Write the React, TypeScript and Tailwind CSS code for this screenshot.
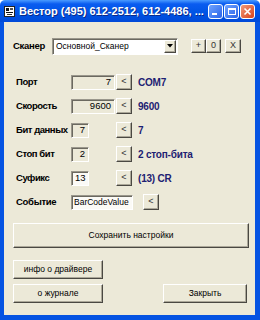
const btn =
  "flex items-center justify-center bg-[#ece9d8] border border-t-white border-l-white border-b-[#4a4842] border-r-[#4a4842] shadow-[inset_-1px_-1px_0_#aca899]";
const sunken =
  "border border-t-[#9a978c] border-l-[#9a978c] border-b-white border-r-white shadow-[inset_1px_1px_0_#6b6960]";

function ArrowBtn({ className = "" }: { className?: string }) {
  return (
    <div className={`${btn} w-[16px] h-[16px] text-[9px] text-[#333] ${className}`}>
      &lt;
    </div>
  );
}

function Field({
  label,
  value,
  wide,
  white,
  right,
  info,
}: {
  label: string;
  value: string;
  wide?: boolean;
  white?: boolean;
  right?: boolean;
  info: string;
}) {
  return (
    <div className="flex items-center h-[16px]">
      <div className="w-[67px] pl-[12px] text-[9.5px] tracking-[-0.45px] font-bold text-black whitespace-nowrap">{label}</div>
      <div className="w-[45px] h-[15px]">
        <div
          className={`${sunken} h-[15px] flex items-center text-[9.5px] px-[3px] ${wide ? "w-[44px]" : "w-[18px]"} ${
            white ? "bg-[#fbfaf6]" : "bg-[#ece9d8]"
          } ${right ? "justify-end" : "justify-start"}`}
        >
          {value}
        </div>
      </div>
      <ArrowBtn />
      <div className="ml-[6px] text-[10px] tracking-[-0.2px] font-bold text-[#1d2172] whitespace-nowrap">{info}</div>
    </div>
  );
}

export default function App() {
  return (
    <div
      className="w-[260px] h-[320px] flex flex-col bg-white text-black"
      style={{ fontFamily: '"Liberation Sans", Arial, sans-serif' }}
    >
      {/* Title bar */}
      <div className="h-[22px] shrink-0 rounded-t-[5px] bg-[linear-gradient(180deg,#4a9bff_0%,#0a5cf0_18%,#0055e6_55%,#0049d8_100%)] flex items-center pl-[4px] pr-[5px]">
        <svg width="11" height="11" viewBox="0 0 11 11" className="shrink-0">
          <rect x="0.5" y="0.5" width="10" height="10" fill="#fff" stroke="#222" />
          <rect x="2" y="2" width="3" height="3" fill="#111" />
          <rect x="6" y="2" width="3" height="2" fill="#555" />
          <rect x="2" y="6" width="7" height="1" fill="#111" />
          <rect x="3" y="8" width="5" height="1" fill="#333" />
        </svg>
        <div className="ml-[4px] flex-1 text-[11px] font-bold text-white whitespace-nowrap overflow-hidden [text-shadow:1px_1px_0_#0a2a8a]">
          Вестор (495) 612-2512, 612-4486, ...
        </div>
        <div className="flex gap-[1px]">
          <div className="w-[15px] h-[15px] rounded-[3px] border border-white bg-[linear-gradient(135deg,#6fa3ff,#2a63e8)] flex items-end justify-start pl-[3px] pb-[3px]">
            <div className="w-[5px] h-[2px] bg-white" />
          </div>
          <div className="w-[15px] h-[15px] rounded-[3px] border border-white bg-[linear-gradient(135deg,#6fa3ff,#2a63e8)] flex items-center justify-center">
            <div className="w-[8px] h-[7px] border border-white border-t-2" />
          </div>
          <div className="w-[15px] h-[15px] rounded-[3px] border border-white bg-[linear-gradient(135deg,#f09a7a,#d9421b)] flex items-center justify-center">
            <svg width="9" height="9" viewBox="0 0 9 9">
              <path d="M1.5 1.5 L7.5 7.5 M7.5 1.5 L1.5 7.5" stroke="#fff" strokeWidth="1.6" />
            </svg>
          </div>
        </div>
      </div>

      {/* Frame + client */}
      <div className="flex-1 flex flex-col border-l-4 border-r-[5px] border-b-[5px] border-[#0553e2]">
        <div className="flex-1 bg-[#ece9d8] flex flex-col pt-[16px]">
          {/* Scanner row */}
          <div className="flex items-center h-[16px]">
            <div className="w-[48px] pl-[9px] text-[9.5px] tracking-[-0.3px] font-bold">Сканер</div>
            <div className={`${sunken} bg-white w-[126px] h-[17px] flex items-center justify-between pl-[3px] pr-[1px]`}>
              <span className="text-[8.5px]">Основной_Сканер</span>
              <div className={`${btn} w-[12px] h-[13px]`}>
                <svg width="6" height="4" viewBox="0 0 6 4">
                  <path d="M0 0 H6 L3 3.5 Z" fill="#000" />
                </svg>
              </div>
            </div>
            <div className="ml-[13px] flex">
              <div className={`${btn} w-[15px] h-[14px] text-[9px] text-[#333]`}>+</div>
              <div className={`${btn} w-[15px] h-[14px] text-[9px] text-[#333]`}>0</div>
            </div>
            <div className={`${btn} ml-[4px] w-[16px] h-[14px] text-[9px] text-[#333]`}>X</div>
          </div>

          <div className="mt-[20px] flex flex-col gap-[8px]">
            <Field label="Порт" value="7" wide right info="COM7" />
            <Field label="Скорость" value="9600" wide right info="9600" />
            <Field label="Бит данных" value="7" right info="7" />
            <Field label="Стоп бит" value="2" right info="2 стоп-бита" />
            <Field label="Суфикс" value="13" white info="(13) CR" />
            <div className="flex items-center h-[16px]">
              <div className="w-[67px] pl-[12px] text-[9.5px] tracking-[-0.3px] font-bold whitespace-nowrap">Событие</div>
              <div className={`${sunken} bg-[#fbfaf6] w-[62px] h-[15px] flex items-center text-[8.5px] px-[2px] overflow-hidden whitespace-nowrap`}>
                BarCodeValue
              </div>
              <ArrowBtn className="ml-[10px]" />
            </div>
          </div>

          <div className={`${btn} ml-[9px] mt-[13px] w-[236px] h-[25px] text-[8.5px]`}>Сохранить настройки</div>

          <div className={`${btn} ml-[9px] mt-[12px] w-[90px] h-[19px] text-[8.5px]`}>инфо о драйвере</div>
          <div className="mt-[5px] flex items-center justify-between pl-[9px] pr-[8px]">
            <div className={`${btn} w-[90px] h-[19px] text-[8.5px]`}>о журнале</div>
            <div className={`${btn} w-[84px] h-[19px] text-[8.5px]`}>Закрыть</div>
          </div>
        </div>
      </div>
    </div>
  );
}
